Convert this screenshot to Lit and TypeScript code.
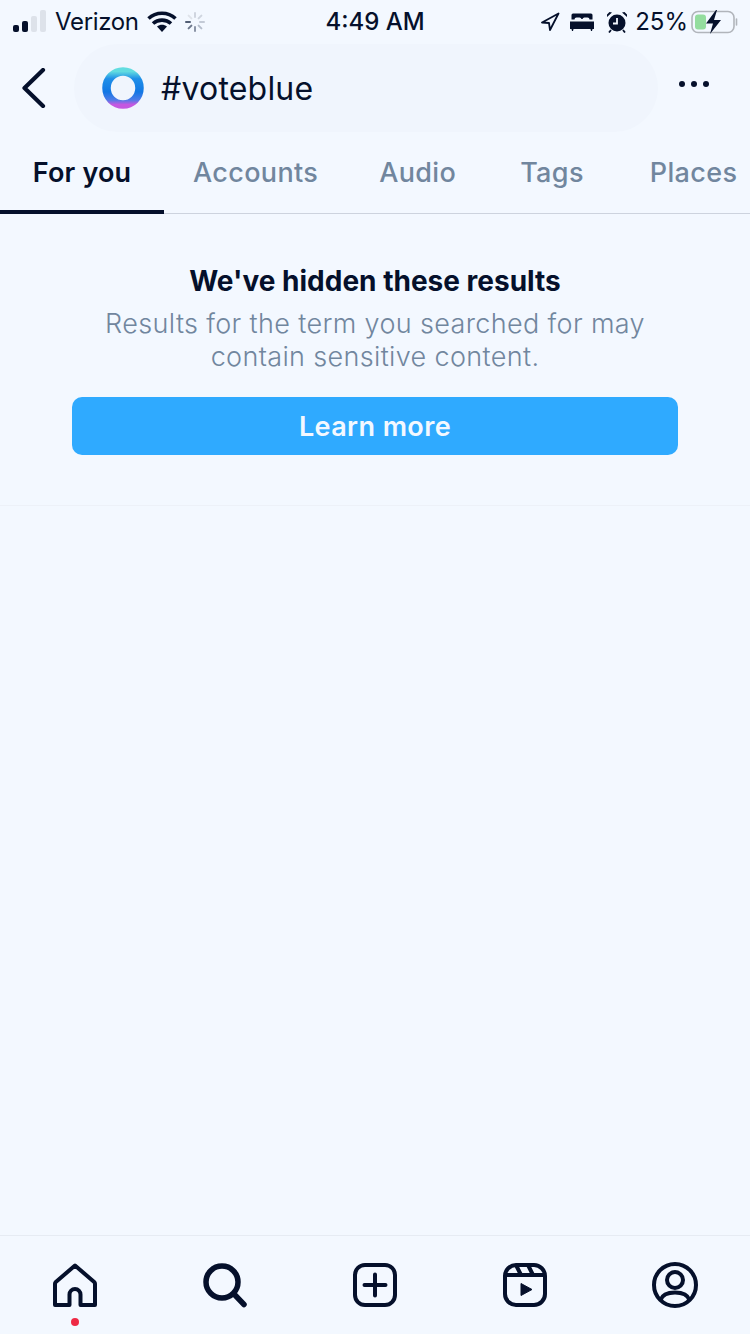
import { LitElement, html, css } from "lit";
import { customElement } from "lit/decorators.js";

@customElement("app-root")
export class AppRoot extends LitElement {
  static styles = css`
    :host { display: block; width: 750px; height: 1334px; overflow: hidden; background: #f3f8ff; color: #05102b; font-family: Inter, "Noto Sans", sans-serif; }
    .page { height: 1334px; display: flex; flex-direction: column; }
    svg { display: block; flex: none; }
    .status { height: 44px; flex: none; display: grid; grid-template-columns: 1fr auto 1fr; align-items: center; padding: 0 12px 1px 13px; box-sizing: border-box; font-size: 24px; line-height: 30px; }
    .s-left, .s-right { display: flex; align-items: center; }
    .s-left { gap: 9px; }
    .s-right { justify-content: flex-end; }
    .time { font-weight: 500; font-size: 24px; margin-left: -1px; }
    .carrier { letter-spacing: -0.35px; margin-right: -1px; }
    .pct { margin: 0 2px 0 7px; }
    .search { height: 88px; flex: none; display: flex; align-items: center; padding: 0 24px 0 20px; }
    .back { margin-right: 27px; }
    .pill { width: 584px; height: 88px; flex: none; border-radius: 44px; background: #f0f5fd; display: flex; align-items: center; padding-left: 28px; box-sizing: border-box; gap: 17px; font-size: 32px; letter-spacing: 0.2px; }
    .more { margin: 0 0 9px 20px; }
    .tabs { height: 82px; flex: none; display: flex; border-bottom: 1px solid #cdd3de; box-sizing: border-box; font-size: 27px; font-weight: 500; color: #71869e; white-space: nowrap; letter-spacing: 0.35px; }
    .tab { flex: none; height: 81px; box-sizing: border-box; padding: 0 31px 0 0; display: flex; align-items: center; margin-left: 31px; }
    .tab.active { width: 164px; margin: 0; padding: 2px 0 0; justify-content: center; color: #05102b; font-weight: 600; border-bottom: 4px solid #05102b; height: 82px; letter-spacing: 0.15px; }
    .tab.active + .tab { margin-left: 29px; }
    .tab:nth-child(3) { margin-left: 30px; }
    .tab:nth-child(4) { margin-left: 33px; }
    .tab:last-child { margin-left: 35px; }
    .notice { flex: none; height: 292px; border-bottom: 1px solid #edf1f8; box-sizing: border-box; display: flex; flex-direction: column; align-items: center; padding-top: 49px; text-align: center; }
    h2 { margin: 0; font-size: 28px; line-height: 36px; font-weight: 700; }
    p { margin: 8px 0 0; font-size: 27px; line-height: 33px; color: #71869e; font-weight: 300; width: 600px; letter-spacing: 0.35px; }
    button { all: unset; margin-top: 24px; width: 606px; height: 58px; border-radius: 10px; background: #2faaff; color: #f3f8ff; font-size: 27px; font-weight: 600; letter-spacing: 0.4px; text-align: center; line-height: 60px; }
    .spacer { flex: 1; }
    .nav { height: 99px; flex: none; border-top: 1px solid #e6ebf3; box-sizing: border-box; display: grid; grid-template-columns: repeat(5, 150px); justify-items: center; padding-top: 27px; position: relative; }
    .dot { position: absolute; left: 71px; top: 82px; width: 8px; height: 8px; border-radius: 50%; background: #ee2a45; }
    .profile { margin-top: -2px; }
    .bed { margin-left: 10px; }
    .alarm { margin-left: 12px; }
    .spinner { margin-left: -1px; }
  `;

  render() {
    return html`<div class="page">
      <div class="status">
        <div class="s-left">
          <svg width="33" height="24" viewBox="0 0 33 24"><rect x="0" y="15" width="6" height="7" rx="2" fill="#05102b"/><rect x="9" y="11" width="6" height="11" rx="2" fill="#05102b"/><rect x="18" y="6" width="6" height="16" rx="2" fill="#dde2ea"/><rect x="27" y="0" width="6" height="22" rx="2" fill="#dde2ea"/></svg>
          <span class="carrier">Verizon</span>
          <svg width="30" height="22" viewBox="0 0 30 22"><path d="M1.500 7.500C9 .5 21 .5 28.500 7.500M6 12.500C11 8 19 8 24 12.500" fill="none" stroke="#05102b" stroke-width="3.600"/><path d="M10 15.500C13 13 17 13 20 15.500L15 21Z" fill="#05102b"/></svg>
          <svg class="spinner" width="20" height="20" viewBox="0 0 20 20" stroke-width="2" stroke-linecap="round"><path d="M10 1v4" stroke="#cfd5df"/><path d="M16.400 3.600l-2.800 2.800" stroke="#cfd5df"/><path d="M19 10h-4" stroke="#c3cad6"/><path d="M16.400 16.400l-2.800-2.800" stroke="#b5bdcb"/><path d="M10 19v-4" stroke="#8b95a7"/><path d="M3.600 16.400l2.800-2.800" stroke="#6d788c"/><path d="M1 10h4" stroke="#525e74"/><path d="M3.600 3.600l2.800 2.800" stroke="#dfe3ea"/></svg>
        </div>
        <div class="time">4:49 AM</div>
        <div class="s-right">
          <svg width="19" height="19" viewBox="0 0 19 19" fill="none" stroke="#05102b" stroke-width="1.800" stroke-linejoin="round"><path d="M17.500 1.500 1 10.500 8 11 9 18Z"/></svg>
          <svg class="bed" width="24" height="20" viewBox="0 0 24 20"><path d="M3 1.500h18a1.500 1.500 0 0 1 1.500 1.500v4.500h-3a2 2 0 0 0-2-2h-3a2 2 0 0 0-2 1.500h-1a2 2 0 0 0-2-1.500h-3a2 2 0 0 0-2 2h-3V3A1.500 1.500 0 0 1 3 1.500Z" fill="#05102b"/><path d="M0 9.500h24v7.500h-1.500l-.5 2h-1l-.5-2h-17l-.5 2h-1l-.5-2H0Z" fill="#05102b"/></svg>
          <svg class="alarm" width="22" height="22" viewBox="0 0 22 22"><circle cx="11" cy="12" r="8.500" fill="#05102b"/><path d="M11 7v5.500H7" fill="none" stroke="#f3f8ff" stroke-width="1.800"/><path d="M1 6 6 1.500 3.500 1 1 3.500ZM21 6 16 1.500 18.500 1 21 3.500Z" fill="#05102b"/><path d="M5 19l-2 2.500M17 19l2 2.500" stroke="#05102b" stroke-width="1.800"/></svg>
          <span class="pct">25%</span>
          <svg width="48" height="24" viewBox="0 0 48 24"><rect x="2" y="1.500" width="42" height="21" rx="6" fill="none" stroke="#b1b5bb" stroke-width="1.600"/><rect x="5" y="4.500" width="11" height="15" rx="3" fill="#93dd9e"/><path d="M46.500 9v6" stroke="#b1b5bb" stroke-width="1.600" stroke-linecap="round"/><path d="M26 0 16 13.500h7L20 24l11-14h-7l3-10Z" fill="#05102b"/></svg>
        </div>
      </div>

      <div class="search">
        <svg class="back" width="27" height="40" viewBox="0 0 27 40" fill="none" stroke="#05102b" stroke-width="4.200" stroke-linecap="round" stroke-linejoin="round"><path d="M23 2 4.500 20 23 38"/></svg>
        <div class="pill">
          <svg width="42" height="42" viewBox="0 0 42 42"><defs><linearGradient id="g" x1="0" y1="0" x2="0" y2="1"><stop offset="0" stop-color="#62dce0"/><stop offset=".22" stop-color="#1f8fe8"/><stop offset=".62" stop-color="#1277e4"/><stop offset=".86" stop-color="#4d7be8"/><stop offset="1" stop-color="#c458e0"/></linearGradient></defs><circle cx="21" cy="21" r="16.500" fill="none" stroke="url(#g)" stroke-width="8.500"/></svg>
          <span>#voteblue</span>
        </div>
        <svg class="more" width="32" height="8" viewBox="0 0 32 8" fill="#05102b"><circle cx="4" cy="4" r="3"/><circle cx="16" cy="4" r="3"/><circle cx="28" cy="4" r="3"/></svg>
      </div>

      <div class="tabs">
        <div class="tab active">For you</div>
        <div class="tab">Accounts</div>
        <div class="tab">Audio</div>
        <div class="tab">Tags</div>
        <div class="tab">Places</div>
      </div>

      <div class="notice">
        <h2>We've hidden these results</h2>
        <p>Results for the term you searched for may contain sensitive content.</p>
        <button>Learn more</button>
      </div>

      <div class="spacer"></div>

      <div class="nav">
        <svg width="46" height="46" viewBox="0 0 46 46" fill="none" stroke="#05102b" stroke-width="4" stroke-linejoin="round"><path d="M23 2.500 3.800 19a2.500 2.500 0 0 0-.8 2V42h14.500V31.500a5.500 5.500 0 0 1 11 0V42H43V21a2.500 2.500 0 0 0-.8-2Z"/></svg>
        <svg width="46" height="46" viewBox="0 0 46 46" fill="none" stroke="#05102b" stroke-width="5.500" stroke-linecap="round"><circle cx="20" cy="19" r="16"/><path d="M32 31 42 41.500"/></svg>
        <svg width="46" height="46" viewBox="0 0 46 46" fill="none" stroke="#05102b" stroke-width="4" stroke-linecap="round"><rect x="3" y="2" width="40" height="40" rx="10"/><path d="M23 11.500v21M12.500 22h21"/></svg>
        <svg width="46" height="46" viewBox="0 0 46 46" fill="none" stroke="#05102b" stroke-width="4" stroke-linejoin="round"><rect x="3" y="2" width="40" height="40" rx="11"/><path d="M3 12h40M14 2l5 10M26 2l5 10"/><path d="M19 20.500 30 26.500 19 32.500Z" fill="#05102b" stroke-width="1"/></svg>
        <svg class="profile" width="48" height="48" viewBox="0 0 48 48" fill="none" stroke="#05102b" stroke-width="4"><circle cx="24" cy="24" r="21"/><circle cx="24" cy="19" r="8"/><path d="M9.500 39c2-6 8-7.500 14.500-7.500S36.500 33 38.500 39"/></svg>
        <span class="dot"></span>
      </div>
    </div>`;
  }
}
